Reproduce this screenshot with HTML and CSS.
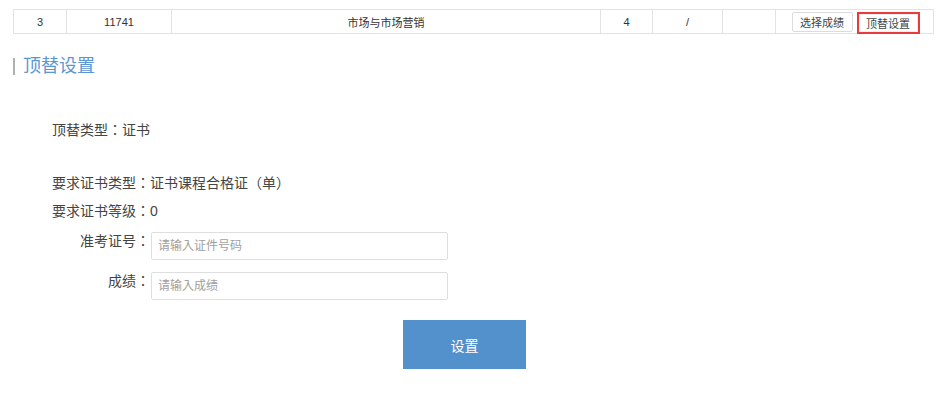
FILE: index.html
```html
<!DOCTYPE html>
<html lang="zh-CN">
<head>
    <meta charset="UTF-8">
    <meta name="viewport" content="width=device-width, initial-scale=1.0">
    <title>顶替设置</title>
    <link rel="stylesheet" href="styles.css">
</head>
<body>
    <table class="list">
        <tr>
            <td class="c-no">3</td>
            <td class="c-code">11741</td>
            <td class="c-name">市场与市场营销</td>
            <td class="c-credit">4</td>
            <td class="c-score">/</td>
            <td class="c-empty"></td>
            <td class="c-ops">
                <div class="ops">
                    <button class="btn-small">选择成绩</button>
                    <button class="btn-small active">顶替设置</button>
                </div>
            </td>
        </tr>
    </table>

    <h2 class="title">顶替设置</h2>

    <div class="info">
        <p class="line first">顶替类型：证书</p>
        <p class="line gap">要求证书类型：证书课程合格证（单）</p>
        <p class="line">要求证书等级：0</p>
    </div>

    <div class="form">
        <div class="row">
            <label class="label">准考证号：</label>
            <input class="field" type="text" placeholder="请输入证件号码">
        </div>
        <div class="row">
            <label class="label">成绩：</label>
            <input class="field" type="text" placeholder="请输入成绩">
        </div>
        <button class="btn-submit">设置</button>
    </div>
</body>
</html>
```

FILE: styles.css
```css
* {
    font-family: "Liberation Sans", "Noto Sans CJK TC", sans-serif;
    font-feature-settings: "locl" 0;
    box-sizing: border-box;
}
body {
    margin: 0;
    color: #444;
    background: #fff;
}
.list {
    border-collapse: collapse;
    margin: 9px 0 0 13px;
    width: 920px;
    table-layout: fixed;
}
.list td {
    border: 1px solid #e3e3e3;
    height: 24px;
    padding: 0;
    text-align: center;
    font-size: 11px;
    color: #333;
}
.c-no { width: 53px; }
.c-code { width: 105px; }
.c-name { width: 429px; }
.c-credit { width: 52px; }
.c-score { width: 70px; }
.c-empty { width: 53px; }
.c-ops { width: 158px; }
.ops {
    display: flex;
    justify-content: center;
    align-items: center;
    height: 22px;
}
.btn-small {
    background: #fff;
    border: 1px solid #dcdcdc;
    border-radius: 2px;
    height: 20px;
    width: 61px;
    padding: 0;
    font-size: 11px;
    color: #444;
}
.btn-small.active {
    width: 59px;
    height: 18px;
    margin-left: 6px;
    margin-top: 3px;
    border-color: #f0f0f0;
    border-radius: 0;
    outline: 2px solid #e83b3b;
}
.title {
    margin: 24px 0 0 13px;
    padding-left: 8px;
    border-left: 2px solid #b0b0b0;
    font-size: 18px;
    line-height: 17px;
    font-weight: normal;
    color: #5a96d4;
    height: 17px;
}
.info {
    padding-left: 52px;
}
.line {
    margin: 8px 0 0;
    font-size: 14px;
    line-height: 20px;
}
.line.first {
    margin-top: 45px;
}
.line.gap {
    margin-top: 33px;
}
.form {
    padding-left: 52px;
    display: flex;
    flex-direction: column;
    align-items: flex-start;
}
.row {
    display: flex;
    align-items: flex-start;
    margin-top: 11px;
}
.row + .row {
    margin-top: 12px;
}
.label {
    width: 98px;
    text-align: right;
    font-size: 14px;
    line-height: 18px;
}
.field {
    margin-left: 1px;
    width: 297px;
    height: 28px;
    border: 1px solid #dedede;
    border-radius: 2px;
    padding: 0 6px;
    font-size: 12px;
    color: #333;
    outline: 0;
}
.field::placeholder {
    color: #a0a0a0;
}
.btn-submit {
    margin: 20px 0 0 351px;
    width: 123px;
    height: 49px;
    background: #5391cd;
    border: 0;
    color: #fff;
    font-size: 14px;
    cursor: pointer;
}
```
